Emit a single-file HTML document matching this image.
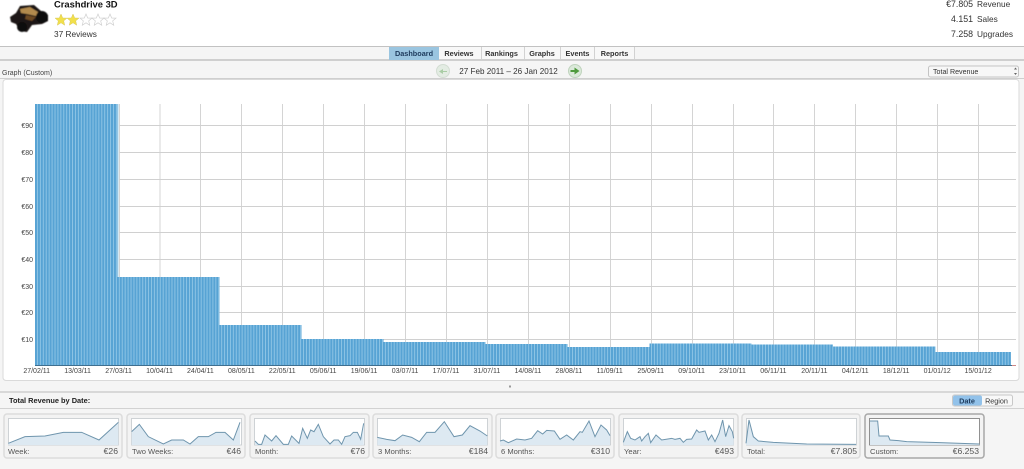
<!DOCTYPE html>
<html><head><meta charset="utf-8"><title>Crashdrive 3D</title>
<style>
html,body{margin:0;padding:0;background:#f5f5f5;overflow:hidden}
svg{display:block}
text{font-family:"Liberation Sans",sans-serif;font-size:8.3px;fill:#333}
.b{font-weight:bold}
.ax{font-size:7px;fill:#444}
.tab{font-size:7.3px;font-weight:bold;fill:#333;text-anchor:middle}
.st{font-size:8.3px;fill:#333}
.sn{font-size:8.8px;fill:#333;text-anchor:end}
.cl{font-size:7.6px;fill:#555}
.cv{font-size:8.6px;fill:#555;text-anchor:end}
.card{fill:#f3f3f3;stroke:#dcdcdc;stroke-width:1.5}
.box{fill:#fff;stroke:#c4c8cc;stroke-width:.8}
.a{fill:#dde9f2;stroke:none}
.l{fill:none;stroke:#6f95ad;stroke-width:3}
</style></head><body>
<svg xmlns="http://www.w3.org/2000/svg" width="1024" height="469" viewBox="0 0 1024 469">
<defs>
<pattern id="bars" patternUnits="userSpaceOnUse" x="35" y="0" width="2.924" height="10">
<rect width="2.924" height="10" fill="#90c6e6"/><rect width="2" height="10" fill="#57a3d4"/>
</pattern>
<polygon id="s" points="0,-6 1.7,-2 6,-1.9 2.7,.9 3.7,5.2 0,2.8 -3.7,5.2 -2.7,.9 -6,-1.9 -1.7,-2"/>
<filter id="soft"><feGaussianBlur stdDeviation=".6"/></filter>
</defs>

<!-- header -->
<rect width="1024" height="46" fill="#fff"/>
<rect y="46" width="1024" height="1" fill="#c2c2c2"/>
<rect y="47" width="1024" height="12" fill="#f5f5f5"/>
<rect y="59" width="1024" height="2" fill="#cfcfcf"/>
<rect y="61" width="1024" height="17" fill="#f5f5f5"/>
<rect y="78" width="1024" height="1" fill="#cfcfcf"/>

<!-- app icon -->
<g filter="url(#soft)">
<path d="M10 17 L16 13 L20 6 L34 5 L41 11 L48 15 L48 21 L42 24 L32 25 L27 32 L20 31 L16 24 L11 22Z" fill="#1b1512"/>
<path d="M20 9 L30 7 L38 12 L36 16 L27 14 L21 13Z" fill="#b28a4e"/>
<path d="M26 15 L36 17 L32 21 L25 19Z" fill="#6d4a24"/>
<circle cx="42" cy="17" r="6" fill="#0e0c0b"/><circle cx="22" cy="27" r="5" fill="#0e0c0b"/>
</g>
<text x="54" y="7.500" class="b" style="font-size:9.400px;fill:#111">Crashdrive 3D</text>
<g fill="#f2e04a" stroke="#d8c85a" stroke-width=".5">
<use href="#s" x="61" y="20"/><use href="#s" x="73" y="20"/>
</g>
<g fill="#fff" stroke="#cfcfcf" stroke-width=".7">
<use href="#s" x="86" y="20"/><use href="#s" x="98" y="20"/><use href="#s" x="110" y="20"/>
</g>
<text x="54" y="37" class="st">37 Reviews</text>

<text x="973" y="7" class="sn">€7.805</text><text x="977" y="7" class="st">Revenue</text>
<text x="973" y="22" class="sn">4.151</text><text x="977" y="22" class="st">Sales</text>
<text x="973" y="37" class="sn">7.258</text><text x="977" y="37" class="st">Upgrades</text>

<!-- tabs -->
<rect x="389" y="47" width="50" height="13" fill="#9ac5e0"/>
<rect x="439" y="47" width="195" height="12" fill="#f8f8f8"/>
<path d="M481.500 47V59M524.500 47V59M560.500 47V59M594.500 47V59M634.500 47V59" stroke="#d2d2d2" fill="none"/>
<text x="414" y="56" class="tab" style="fill:#1d3a5c">Dashboard</text>
<text x="459" y="56" class="tab">Reviews</text>
<text x="501.500" y="56" class="tab">Rankings</text>
<text x="542" y="56" class="tab">Graphs</text>
<text x="577.500" y="56" class="tab">Events</text>
<text x="614.500" y="56" class="tab">Reports</text>

<!-- toolbar -->
<text x="2" y="75" style="font-size:7px;fill:#444">Graph (Custom)</text>
<circle cx="443" cy="71" r="6.500" fill="#e3ece3" stroke="#d3ddd3"/>
<path d="M447 71H443V69L439 71.500L443 74V72H447Z" fill="#a9cda5"/>
<text x="508.500" y="74" text-anchor="middle" style="font-size:8.100px;fill:#333">27 Feb 2011 – 26 Jan 2012</text>
<circle cx="575" cy="71" r="6.500" fill="#dbe9da" stroke="#bfd3bd"/>
<path d="M570.500 70H574.500V67.500L579.500 71L574.500 74.500V72H570.500Z" fill="#4f9a3e"/>
<rect x="928.500" y="66" width="90" height="11" rx="2" fill="#f7f7f7" stroke="#c4c4c4"/>
<text x="933" y="74" style="font-size:7.100px;fill:#333">Total Revenue</text>
<path d="M1014 69.500l1.500-2 1.500 2ZM1014 73l1.500 2 1.500-2Z" fill="#666"/>

<!-- chart panel -->
<rect x="3" y="79.500" width="1016" height="301" rx="3" fill="#fff" stroke="#dadada"/>
<path d="M37.500 104V365M78.500 104V365M119.500 104V365M160 104V365M200.500 104V365M241.500 104V365M282.500 104V365M323.500 104V365M364.500 104V365M405.500 104V365M446.500 104V365M487.500 104V365M528.500 104V365M569.500 104V365M610.500 104V365M651.500 104V365M692.500 104V365M733.500 104V365M773.500 104V365M814.500 104V365M855.500 104V365M896.500 104V365M937.500 104V365M978.500 104V365" stroke="#d4d4d4" fill="none"/>
<path d="M35 125.500H1016M35 152.500H1016M35 179.500H1016M35 206.500H1016M35 232.500H1016M35 259.500H1016M35 286.500H1016M35 312.500H1016M35 339.500H1016" stroke="#d0d0d0" fill="none"/>
<path d="M35 104H117.500V277H219.500V325H301.500V339H383.500V342H485.500V344H567.500V347H649.500V343.500H751.500V344.500H833V346.500H935.500V352H1011V365H35Z" fill="url(#bars)"/>
<rect x="117.500" y="104" width="1.500" height="173" fill="#d3e9f5"/>
<rect x="35" y="365" width="977" height="1" fill="#3f6f8f"/>
<rect x="1012" y="365" width="4" height="1" fill="#c88"/>

<g text-anchor="end">
<text class="ax" x="33" y="128">€90</text>
<text class="ax" x="33" y="155">€80</text>
<text class="ax" x="33" y="182">€70</text>
<text class="ax" x="33" y="209">€60</text>
<text class="ax" x="33" y="235">€50</text>
<text class="ax" x="33" y="262">€40</text>
<text class="ax" x="33" y="289">€30</text>
<text class="ax" x="33" y="315">€20</text>
<text class="ax" x="33" y="342">€10</text>
</g>
<g text-anchor="middle">
<text class="ax" x="36.700" y="373">27/02/11</text>
<text class="ax" x="77.600" y="373">13/03/11</text>
<text class="ax" x="118.600" y="373">27/03/11</text>
<text class="ax" x="159.500" y="373">10/04/11</text>
<text class="ax" x="200.400" y="373">24/04/11</text>
<text class="ax" x="241.400" y="373">08/05/11</text>
<text class="ax" x="282.300" y="373">22/05/11</text>
<text class="ax" x="323.200" y="373">05/06/11</text>
<text class="ax" x="364.100" y="373">19/06/11</text>
<text class="ax" x="405.100" y="373">03/07/11</text>
<text class="ax" x="446" y="373">17/07/11</text>
<text class="ax" x="486.900" y="373">31/07/11</text>
<text class="ax" x="527.900" y="373">14/08/11</text>
<text class="ax" x="568.800" y="373">28/08/11</text>
<text class="ax" x="609.700" y="373">11/09/11</text>
<text class="ax" x="650.700" y="373">25/09/11</text>
<text class="ax" x="691.600" y="373">09/10/11</text>
<text class="ax" x="732.500" y="373">23/10/11</text>
<text class="ax" x="773.400" y="373">06/11/11</text>
<text class="ax" x="814.400" y="373">20/11/11</text>
<text class="ax" x="855.300" y="373">04/12/11</text>
<text class="ax" x="896.200" y="373">18/12/11</text>
<text class="ax" x="937.200" y="373">01/01/12</text>
<text class="ax" x="978.100" y="373">15/01/12</text>
</g>

<!-- splitter -->
<rect x="509" y="385.500" width="2" height="2" fill="#999"/>
<rect y="391" width="1024" height="2" fill="#d8d8d8"/>
<text x="9" y="403" class="b" style="font-size:7.400px;fill:#222">Total Revenue by Date:</text>
<rect y="408" width="1024" height="1" fill="#d2d2d2"/>
<rect x="952.500" y="395" width="60" height="11" rx="2" fill="#f8f8f8" stroke="#c8c8c8"/>
<rect x="953" y="395.500" width="29" height="10" rx="2" fill="#92c2ea"/>
<text x="967" y="403.500" text-anchor="middle" style="font-size:7.300px;font-weight:bold;fill:#1d3a5c">Date</text>
<text x="996.500" y="403.500" text-anchor="middle" style="font-size:7.200px;fill:#333">Region</text>

<!-- cards -->
<rect class="card" x="4" y="414" width="118" height="44" rx="3"/>
<rect class="card" x="127" y="414" width="118" height="44" rx="3"/>
<rect class="card" x="250" y="414" width="119" height="44" rx="3"/>
<rect class="card" x="373" y="414" width="119" height="44" rx="3"/>
<rect class="card" x="496" y="414" width="118" height="44" rx="3"/>
<rect class="card" x="619" y="414" width="119" height="44" rx="3"/>
<rect class="card" x="742" y="414" width="118" height="44" rx="3"/>
<rect class="card" x="865" y="414" width="119" height="44" rx="3" style="stroke:#a8a8a8"/>

<rect class="box" x="8.500" y="418.500" width="110" height="26.500"/>
<rect class="box" x="131.500" y="418.500" width="110" height="26.500"/>
<rect class="box" x="254.500" y="418.500" width="110" height="26.500"/>
<rect class="box" x="377.500" y="418.500" width="110" height="26.500"/>
<rect class="box" x="500.500" y="418.500" width="110" height="26.500"/>
<rect class="box" x="623.500" y="418.500" width="110" height="26.500"/>
<rect class="box" x="746.500" y="418.500" width="110" height="26.500"/>
<rect class="box" x="869.500" y="418.500" width="110" height="26.500" style="stroke:#777"/>

<g transform="translate(0 405) scale(.33333)">
<path class="a" d="M25 115L75 95L135 93L190 82L245 82L297 105L355 52V120H25Z"/>
<path class="l" d="M25 115L75 95L135 93L190 82L245 82L297 105L355 52"/>
<path class="a" d="M395 80L418 58L445 95L490 117L515 105L550 105L570 117L595 95L625 95L648 82L675 82L700 105L720 52V120H395Z"/>
<path class="l" d="M395 80L418 58L445 95L490 117L515 105L550 105L570 117L595 95L625 95L648 82L675 82L700 105L720 52"/>
</g>
<g transform="translate(250 405) scale(.33333)">
<path class="a" d="M15 108L25 118L35 118L45 90L65 108L78 92L100 118L115 118L125 93L147 115L158 70L172 100L182 75L192 80L205 58L220 95L240 117L252 105L265 105L275 118L285 95L300 92L310 82L322 82L332 103L341 55V120H15Z"/>
<path class="l" d="M15 108L25 118L35 118L45 90L65 108L78 92L100 118L115 118L125 93L147 115L158 70L172 100L182 75L192 80L205 58L220 95L240 117L252 105L265 105L275 118L285 95L300 92L310 82L322 82L332 103L341 55"/>
<path class="a" d="M382 97L410 103L435 107L458 90L485 97L508 110L530 82L555 82L583 50L612 95L637 90L660 62L690 78L712 93V120H382Z"/>
<path class="l" d="M382 97L410 103L435 107L458 90L485 97L508 110L530 82L555 82L583 50L612 95L637 90L660 62L690 78L712 93"/>
</g>
<g transform="translate(495 405) scale(.33333)">
<path class="a" d="M15 108L25 105L40 113L65 102L90 105L110 100L128 77L143 87L155 76L178 78L195 103L215 90L235 105L255 80L262 82L282 48L300 95L318 60L335 75L345 92V120H15Z"/>
<path class="l" d="M15 108L25 105L40 113L65 102L90 105L110 100L128 77L143 87L155 76L178 78L195 103L215 90L235 105L255 80L262 82L282 48L300 95L318 60L335 75L345 92"/>
<path class="a" d="M385 112L397 80L407 100L420 105L435 95L440 108L450 95L460 85L467 113L483 90L500 105L530 100L540 103L555 100L565 112L575 103L590 102L605 75L612 82L630 78L640 105L650 90L660 110L672 85L683 45L692 95L702 62L712 80L716 100V120H385Z"/>
<path class="l" d="M385 112L397 80L407 100L420 105L435 95L440 108L450 95L460 85L467 113L483 90L500 105L530 100L540 103L555 100L565 112L575 103L590 102L605 75L612 82L630 78L640 105L650 90L660 110L672 85L683 45L692 95L702 62L712 80L716 100"/>
</g>
<g transform="translate(740 405) scale(.33333)">
<path class="a" d="M18 115L27 45L40 95L55 108L100 112L200 117L348 118V120H18Z"/>
<path class="l" d="M18 115L27 45L40 95L55 108L100 112L200 117L348 118"/>
<path class="a" d="M390 48L413 48L417 93L445 93L450 105L475 107L500 110L600 113L718 117V120H390Z"/>
<path class="l" d="M390 48L413 48L417 93L445 93L450 105L475 107L500 110L600 113L718 117"/>
</g>

<text class="cl" x="8" y="454">Week:</text><text class="cv" x="118" y="454">€26</text>
<text class="cl" x="132" y="454">Two Weeks:</text><text class="cv" x="241" y="454">€46</text>
<text class="cl" x="255" y="454">Month:</text><text class="cv" x="365" y="454">€76</text>
<text class="cl" x="378" y="454">3 Months:</text><text class="cv" x="488" y="454">€184</text>
<text class="cl" x="501" y="454">6 Months:</text><text class="cv" x="610" y="454">€310</text>
<text class="cl" x="624" y="454">Year:</text><text class="cv" x="734" y="454">€493</text>
<text class="cl" x="747" y="454">Total:</text><text class="cv" x="857" y="454">€7.805</text>
<text class="cl" x="870" y="454">Custom:</text><text class="cv" x="979" y="454">€6.253</text>
</svg>
</body></html>
